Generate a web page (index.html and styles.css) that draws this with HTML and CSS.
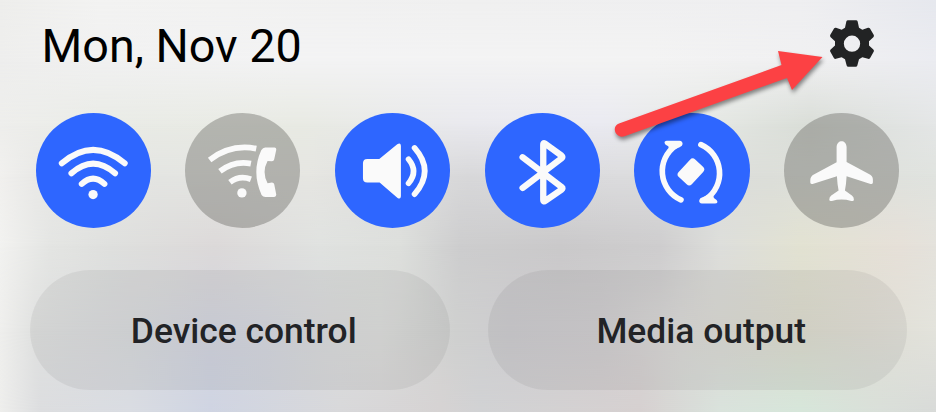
FILE: index.html
```html
<!DOCTYPE html>
<html lang="en">
<head>
<meta charset="utf-8">
<title>Quick settings</title>
<link rel="stylesheet" href="styles.css">
</head>
<body>
<main class="panel">
  <div class="backdrop" aria-hidden="true">
    <i class="band band-1"></i><i class="band band-2"></i><i class="band band-3"></i><i class="band band-4"></i><i class="band band-5"></i><i class="band band-6"></i><i class="band band-7"></i>
  </div>
  <header class="header">
    <h1 class="date">Mon, Nov 20</h1>
    <button class="settings" aria-label="Settings">
      <svg viewBox="690 60 132 140"><path fill-rule="evenodd" d="M744 60H768Q772 60 773 64L777 83L787 89L804 83Q808 82 810 85L821 104Q823 108 820 111L807 123V136L820 148Q823 151 821 155L810 174Q808 177 804 176L787 171L777 177L772 196Q771 200 767 200H745Q741 200 740 196L735 177L725 171L708 176Q704 177 702 174L691 155Q689 151 692 148L705 136V123L692 111Q689 108 691 104L702 85Q704 82 708 83L725 89L735 83L739 64Q740 60 744 60ZM756 106A24.500 24.500 0 1 0 756 155A24.500 24.500 0 1 0 756 106Z"/></svg>
    </button>
  </header>
  <section class="toggles">
    <button class="toggle on" aria-label="Wi-Fi"><svg viewBox="17.500 22 346 346"><g class="line" stroke-width="18"><path d="M95 173Q189 92 284 173M124 203Q189 145 255 203M155 235Q189 203 223 235"/></g><circle cx="189" cy="267" r="14"/></svg></button>
    <button class="toggle" aria-label="Wi-Fi calling"><svg viewBox="16 22 346 346"><g class="line butt" stroke-width="17"><path d="M90 163Q154 114 230 129M121 197Q164 164 214 174M151 230Q180 208 214 221"/></g><circle cx="187" cy="262" r="14"/><path d="M257 126H285Q291 126 290 133L284 161Q283 167 277 167L264 166Q246 199 264 233L277 231Q283 231 284 236L290 266Q291 274 284 274H258Q250 274 246 268Q215 200 245 134Q250 126 257 126Z"/></svg></button>
    <button class="toggle on" aria-label="Sound"><svg viewBox="15 22 346 346"><path d="M112 160H148L202 116Q212 109 213 120V272Q212 283 203 277L149 231H112Q99 231 99 218V173Q99 160 112 160Z"/><g class="line" stroke-width="17"><path d="M236 161Q266 197 236 233M254 127Q315 196 254 266"/></g></svg></button>
    <button class="toggle on" aria-label="Bluetooth"><svg viewBox="15 22 346 346"><path class="line" stroke-width="19" d="M128 155L246 245Q250 248 245 252L197 285Q190 291 190 282V118Q190 109 197 115L245 150Q250 154 245 158L128 247"/></svg></button>
    <button class="toggle on" aria-label="Auto rotate"><svg viewBox="14 22 346 346"><path class="line" stroke-width="17" d="M155 283A94 94 0 0 1 139 120M215 117A94 94 0 0 1 231 280"/><path d="M112 105H151Q160 106 160 115Q160 121 151 125L129 135Q121 139 119 130L117 122L109 117Q101 107 112 105ZM257 294H218Q209 293 210 285Q211 278 218 276L243 265Q250 262 252 270L254 277L262 283Q269 292 257 294Z"/><rect x="158" y="163" width="54" height="72" rx="11" transform="rotate(43 185 199)"/></svg></button>
    <button class="toggle" aria-label="Airplane mode"><svg viewBox="13 22 346 346"><path d="M171 124C172 101 200 101 201 124V169L268 205Q280 211 280 221V231Q280 237 273 235L201 212Q200 235 196 255L217 270Q223 274 223 282Q223 288 215 286Q186 278 157 286Q149 288 149 282Q149 274 155 270L177 255Q173 235 172 212L99 235Q92 237 92 231V223Q92 212 104 206L171 170Z"/></svg></button>
  </section>
  <section class="shortcuts">
    <button class="shortcut">Device control</button>
    <button class="shortcut">Media output</button>
  </section>
  <svg class="pointer" viewBox="0 0 936 412" aria-hidden="true"><path d="M619 123.500L781.500 65L778 51L822.500 57L792 90L787 78L624.500 136.300C616 139 610.500 127 619 123.500Z"/></svg>
</main>
</body>
</html>
```

FILE: styles.css
```css
* { box-sizing: border-box; }
body { margin: 0; font-family: Roboto, sans-serif; }
button { border: 0; padding: 0; font: inherit; color: inherit; }
svg { display: block; }

.panel {
  position: relative;
  width: 936px;
  height: 412px;
  overflow: hidden;
  isolation: isolate;
}

/* Horizontal colour bands, each fading into the next one down. */
.backdrop { position: absolute; inset: 0; z-index: -1; }
.band {
  position: absolute;
  inset: 0;
  -webkit-mask-image: linear-gradient(to bottom, transparent var(--from), #000 var(--to));
  mask-image: linear-gradient(to bottom, transparent var(--from), #000 var(--to));
}
.band-1 { -webkit-mask-image: none; mask-image: none; background: linear-gradient(90deg, #eeeeec, #f3f3f2 100px, #f0f0f0 468px, #efeff1 800px, #e6e8ee); }
.band-2 { --from: 0px; --to: 60px; background: linear-gradient(90deg, #eeeeed, #f1f1f1 100px, #f3f3f4 300px, #f3f3f3 650px, #efeff1 850px, #ebecf1); }
.band-3 { --from: 60px; --to: 125px; background: linear-gradient(90deg, #eeeeec, #e9ebe6 100px, #e8eae3 300px, #e9e9ee 468px, #eaeaf1 600px, #e6e9e5 700px, #d9ddd7 810px, #e4e6e6); }
.band-4 { --from: 125px; --to: 175px; background: linear-gradient(90deg, #f1f0ee, #e9e9e7 35px, #e4e5e2 160px, #e6e6e2 310px, #d8d8da 468px, #dcdcde 620px, #dcded9 770px, #e0e3df); }
.band-5 { --from: 175px; --to: 245px; background: linear-gradient(90deg, #f2f2f0, #e4e5e3 50px, #dfe0de 110px, #dcd9d9 215px, #e0e2e0 320px, #dddfdc 400px, #cdcdce 460px, #cac9ca 560px, #cecdce 660px, #dddedb 720px, #e2e2d2 800px, #e6e0d8 900px, #e4e2dc); }
.band-6 { --from: 245px; --to: 330px; background: linear-gradient(90deg, #efefed, #e0e1e0 35px, #d8dadd 130px, #d3d5df 210px, #d5d7df 265px, #dadbdc 330px, #dcdddb 380px, #cfd0cf 455px, #cdcccf 510px, #d0ced0 600px, #dad9d7 680px, #dddccf 800px, #e0ded5 870px, #e3e3dc); }
.band-7 { --from: 330px; --to: 412px; background: linear-gradient(90deg, #eeeeec, #dcdddf 40px, #d9dce2 130px, #cfd4e2 210px, #d8d8da 340px, #d6d3d3 440px, #d1d2d4 480px, #d6d0d0 640px, #d9e2dc 720px, #d6e6da 800px, #d9dfd9 880px, #d8dad8); }

.header {
  display: flex;
  justify-content: space-between;
  align-items: flex-start;
  height: 112px;
  padding: 19px 62px 0 41.500px;
}
.date {
  margin: 0;
  font-size: 46.700px;
  line-height: 55px;
  font-weight: 400;
  color: #000;
  white-space: nowrap;
}
.settings { width: 44px; height: 47px; margin-top: 1px; background: none; }
.settings svg { width: 44px; height: 47px; fill: #222324; }

.toggles {
  display: flex;
  justify-content: space-between;
  padding: 0.600px 36.700px 0 35.500px;
}
.toggle {
  width: 115.200px;
  height: 115.200px;
  border-radius: 50%;
  background: rgba(100, 100, 95, .4);
}
.toggle.on { background: #2e66ff; }
.toggle svg { width: 100%; height: 100%; fill: #fafafa; }
.toggle .line { fill: none; stroke: #fafafa; stroke-linecap: round; stroke-linejoin: round; }
.toggle .butt { stroke-linecap: butt; }

.shortcuts {
  display: grid;
  grid-template-columns: 419.500px 419.500px;
  column-gap: 38px;
  padding: 42.200px 0 0 30px;
}
.shortcut {
  height: 120.500px;
  padding-top: 2px;
  padding-left: 8px;
  border-radius: 60.250px;
  background: rgba(0, 0, 0, .055);
  font-size: 35.400px;
  font-weight: 500;
  color: #222326;
}

.pointer {
  position: absolute;
  inset: 0;
  fill: #fc4144;
  filter: drop-shadow(1px 3px 2px rgba(0, 0, 0, .45));
  pointer-events: none;
}
```
